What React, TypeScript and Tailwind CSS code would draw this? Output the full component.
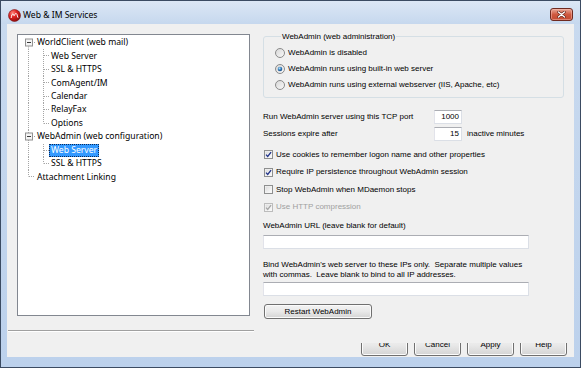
import React from "react";

function Logo() {
  return (
    <svg width="13" height="13" viewBox="0 0 13 13" className="shrink-0">
      <defs>
        <radialGradient id="lg" cx="0.35" cy="0.3" r="0.75">
          <stop offset="0" stopColor="#ff8a80" />
          <stop offset="0.45" stopColor="#e02323" />
          <stop offset="1" stopColor="#8c0a0a" />
        </radialGradient>
      </defs>
      <circle cx="6.5" cy="6.5" r="6" fill="url(#lg)" stroke="#7a1010" strokeWidth="0.6" />
      <path d="M3.2 8.6 C3.6 5.6 4.6 4.2 5.4 5.4 C5.9 6.3 6.1 7.4 6.5 6.2 C7 4.6 8.2 3.8 8.9 5.2 C9.4 6.3 9.3 7.6 9.8 8.4" fill="none" stroke="#fff" strokeWidth="1" strokeLinecap="round" />
    </svg>
  );
}

function CloseBtn() {
  return (
    <div className="w-[23px] h-[13px] rounded-[3px] border border-[#6f2a20] bg-gradient-to-b from-[#e8a797] via-[#cf5940] to-[#c44a31] shadow-[inset_0_0_0_1px_rgba(255,200,190,0.45)] flex items-center justify-center">
      <svg width="9" height="7" viewBox="0 0 9 7">
        <path d="M1.5 1 L7.5 6 M7.5 1 L1.5 6" stroke="#5a1a12" strokeWidth="2.6" strokeLinecap="round" />
        <path d="M1.5 1 L7.5 6 M7.5 1 L1.5 6" stroke="#ffffff" strokeWidth="1.5" strokeLinecap="round" />
      </svg>
    </div>
  );
}

function Radio({ checked }: { checked?: boolean }) {
  return (
    <svg width="10" height="10" viewBox="0 0 10 10" className="shrink-0">
      <defs>
        <linearGradient id="rb" x1="0" y1="0" x2="1" y2="1">
          <stop offset="0" stopColor="#d6d6d6" />
          <stop offset="1" stopColor="#fafafa" />
        </linearGradient>
        <radialGradient id="rd" cx="0.4" cy="0.35" r="0.7">
          <stop offset="0" stopColor="#b6e3fb" />
          <stop offset="0.55" stopColor="#2f78b8" />
          <stop offset="1" stopColor="#18487f" />
        </radialGradient>
      </defs>
      <circle cx="5" cy="5" r="4.5" fill="url(#rb)" stroke="#8a8a8a" strokeWidth="1" />
      {checked && <circle cx="5" cy="5" r="2.3" fill="url(#rd)" />}
    </svg>
  );
}

function Check({ checked, disabled }: { checked?: boolean; disabled?: boolean }) {
  const b = disabled ? "#bcbcbc" : "#8e8f8f";
  const c = disabled ? "#a6a6a6" : "#21348a";
  return (
    <svg width="9" height="9" viewBox="0 0 9 9" className="shrink-0">
      <defs>
        <linearGradient id="cb" x1="0" y1="0" x2="1" y2="1">
          <stop offset="0" stopColor="#dcdcdc" />
          <stop offset="1" stopColor="#fbfbfb" />
        </linearGradient>
      </defs>
      <rect x="0.5" y="0.5" width="8" height="8" fill="#f6f6f6" stroke={b} />
      <rect x="1.5" y="1.5" width="6" height="6" fill="url(#cb)" />
      {checked && (
        <path d="M2 4.6 L3.7 6.4 L7.1 2.2" fill="none" stroke={c} strokeWidth="1.3" />
      )}
    </svg>
  );
}

type Row = {
  label: string;
  level: 0 | 1;
  first?: boolean;
  box?: boolean;
  last?: boolean;
  lastChild?: boolean;
  selected?: boolean;
};

const rows: Row[] = [
  { label: "WorldClient (web mail)", level: 0, first: true, box: true },
  { label: "Web Server", level: 1 },
  { label: "SSL & HTTPS", level: 1 },
  { label: "ComAgent/IM", level: 1 },
  { label: "Calendar", level: 1 },
  { label: "RelayFax", level: 1 },
  { label: "Options", level: 1, lastChild: true },
  { label: "WebAdmin (web configuration)", level: 0, box: true },
  { label: "Web Server", level: 1, selected: true },
  { label: "SSL & HTTPS", level: 1, lastChild: true },
  { label: "Attachment Linking", level: 0, last: true },
];

const RH = 13.44;

function Gutter({ r }: { r: Row }) {
  const w = r.level === 0 ? 17 : 31;
  const m = 6.5;
  const dot = { stroke: "#a5a5a5", strokeWidth: 1, strokeDasharray: "1 1" } as const;
  return (
    <svg width={w} height={RH} className="shrink-0">
      {r.level === 0 && r.first && <line x1="10.5" y1={m} x2="10.5" y2={RH} {...dot} />}
      {r.level === 0 && !r.first && !r.last && <line x1="10.5" y1="0" x2="10.5" y2={RH} {...dot} />}
      {r.level === 0 && r.last && <line x1="10.5" y1="0" x2="10.5" y2={m} {...dot} />}
      {r.level === 0 && r.box && <line x1="14" y1={m} x2="17" y2={m} {...dot} />}
      {r.level === 0 && !r.box && <line x1="11" y1={m} x2="17" y2={m} {...dot} />}
      {r.level === 0 && r.box && (
        <g>
          <rect x="7.5" y="3" width="7" height="7" fill="#f4f4f4" stroke="#919191" />
          <line x1="9" y1={m} x2="13" y2={m} stroke="#3b3b3b" strokeWidth="1" />
        </g>
      )}
      {r.level === 1 && (
        <g>
          <line x1="10.5" y1="0" x2="10.5" y2={RH} {...dot} />
          <line x1="25.5" y1="0" x2="25.5" y2={r.lastChild ? m : RH} {...dot} />
          <line x1="26" y1={m} x2="31" y2={m} {...dot} />
        </g>
      )}
    </svg>
  );
}

function Btn({ children, className = "" }: { children: React.ReactNode; className?: string }) {
  return (
    <div
      className={
        "shrink-0 flex items-center justify-center rounded-[3px] border border-[#707070] bg-gradient-to-b from-[#f3f3f3] via-[#e9e9e9] to-[#d4d4d4] shadow-[inset_0_0_0_1px_#fbfbfb] text-[8px] " +
        className
      }
    >
      {children}
    </div>
  );
}

const inputCls = "bg-white border border-[#dbdfe6] border-t-[#abadb3] border-l-[#e2e3ea]";

export default function App() {
  return (
    <div className="w-[581px] h-[368px] overflow-hidden border border-[#3b4b62] bg-gradient-to-b from-[#c9daef] to-[#bcd1ec] flex flex-col font-['Liberation_Sans',Arial,sans-serif] text-[8px] text-black">
      {/* Title bar */}
      <div className="h-[23px] shrink-0 flex items-start bg-gradient-to-b from-[#dce7f5] to-[#c6d8ee]">
        <div className="ml-[7px] mt-[8px]">
          <Logo />
        </div>
        <span className="ml-[2px] mt-[8px] font-['Noto_Sans',sans-serif] text-[8.6px] leading-[12px] text-black">
          Web &amp; IM Services
        </span>
        <div className="ml-auto mr-[7px] mt-[7px]">
          <CloseBtn />
        </div>
      </div>

      {/* Client area */}
      <div className="mx-[6px] h-[333px] shrink-0 bg-[#f0f0f0] overflow-hidden flex flex-col">
        <div className="flex">
          {/* Left column */}
          <div className="w-[248px] shrink-0 pt-[10px]">
            <div className="ml-[10px] w-[233px] h-[282px] bg-white border border-[#828790] pt-[1px] font-['Noto_Sans',sans-serif] text-[8.6px]">
              {rows.map((r, i) => (
                <div key={i} className="flex items-center h-[13.44px]">
                  <Gutter r={r} />
                  <span
                    className={
                      "px-[2px] h-[13px] flex items-center leading-[13px] whitespace-nowrap " +
                      (r.selected
                        ? "bg-[#3399ff] text-white outline outline-1 outline-dotted outline-[#0a2a5a] -outline-offset-1"
                        : "text-black")
                    }
                  >
                    {r.label}
                  </span>
                </div>
              ))}
            </div>
            <div className="mt-[14px] ml-[1px] w-[246px] h-[2px] border-t border-t-[#a0a0a0] border-b border-b-white" />
          </div>

          {/* Right column */}
          <div className="ml-[8px] w-[301px] shrink-0 pt-[7px]">
            <fieldset className="border border-[#d5dfe5] rounded-[3px] pl-[11px] pt-[3px] pb-[4px]">
              <legend className="ml-[6px] px-[1px] leading-[11px]">WebAdmin (web administration)</legend>
              <div className="flex items-center h-[16px] gap-[3px]">
                <Radio />
                <span>WebAdmin is disabled</span>
              </div>
              <div className="flex items-center h-[16px] gap-[3px]">
                <Radio checked />
                <span>WebAdmin runs using built-in web server</span>
              </div>
              <div className="flex items-center h-[16px] gap-[3px]">
                <Radio />
                <span>WebAdmin runs using external webserver (IIS, Apache, etc)</span>
              </div>
            </fieldset>

            <div className="mt-[12px] flex items-center h-[14px]">
              <span className="w-[171px] shrink-0">Run WebAdmin server using this TCP port</span>
              <div className={inputCls + " w-[28px] h-[14px] flex items-center justify-end pr-[2px]"}>1000</div>
            </div>
            <div className="mt-[3px] flex items-center h-[14px]">
              <span className="w-[171px] shrink-0">Sessions expire after</span>
              <div className={inputCls + " w-[28px] h-[14px] flex items-center justify-end pr-[2px]"}>15</div>
              <span className="ml-[5px]">inactive minutes</span>
            </div>

            <div className="mt-[5px]">
              <div className="h-[17.5px] flex items-center pl-[1px] gap-[3px]">
                <Check checked />
                <span>Use cookies to remember logon name and other properties</span>
              </div>
              <div className="h-[17.5px] flex items-center pl-[1px] gap-[3px]">
                <Check checked />
                <span>Require IP persistence throughout WebAdmin session</span>
              </div>
              <div className="h-[17.5px] flex items-center pl-[1px] gap-[3px]">
                <Check />
                <span>Stop WebAdmin when MDaemon stops</span>
              </div>
              <div className="h-[17.5px] flex items-center pl-[1px] gap-[3px]">
                <Check checked disabled />
                <span className="text-[#a0a0a0]">Use HTTP compression</span>
              </div>
            </div>

            <div className="mt-[4px] leading-[11px]">WebAdmin URL (leave blank for default)</div>
            <div className={inputCls + " mt-[4px] w-[266px] h-[14px]"} />

            <div className="mt-[11px] leading-[9.5px] whitespace-pre">
              {"Bind WebAdmin's web server to these IPs only.  Separate multiple values\nwith commas.  Leave blank to bind to all IP addresses."}
            </div>
            <div className={inputCls + " mt-[3px] w-[266px] h-[14px]"} />

            <Btn className="mt-[8px] ml-[1px] w-[108px] h-[15px]">Restart WebAdmin</Btn>
          </div>
        </div>

        {/* Bottom buttons (upper half hidden by page) */}
        <div className="mt-[11px] h-[13px] shrink-0 overflow-hidden flex items-end justify-end pr-[7px] gap-[6px]">
          <Btn className="w-[47px] h-[22px]">OK</Btn>
          <Btn className="w-[47px] h-[22px]">Cancel</Btn>
          <Btn className="w-[47px] h-[22px]">Apply</Btn>
          <Btn className="w-[47px] h-[22px]">Help</Btn>
        </div>
      </div>
    </div>
  );
}
